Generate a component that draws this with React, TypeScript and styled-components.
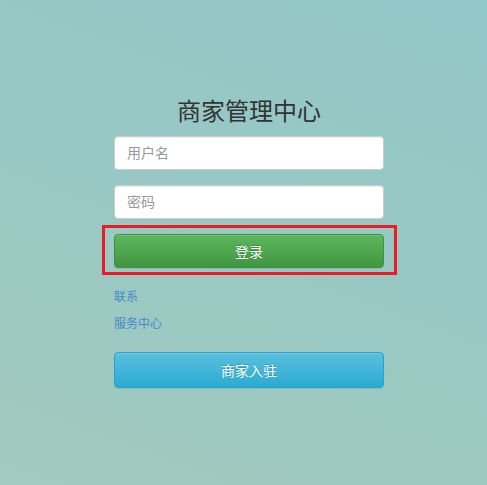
import React from "react";
import styled, { createGlobalStyle } from "styled-components";

const GlobalStyle = createGlobalStyle`
  html, body {
    margin: 0;
    padding: 0;
  }
  body {
    font-family: "Liberation Sans", "Noto Sans CJK SC", sans-serif;
  }
`;

const Page = styled.div`
  min-height: 100vh;
  box-sizing: border-box;
  display: flex;
  justify-content: center;
  padding: 99px 0 0 11px;
  background: linear-gradient(200deg, #92c7c7 0%, #98c8c4 45%, #a2cabe 100%);
`;

const Column = styled.form`
  width: 270px;
  display: flex;
  flex-direction: column;
`;

const Title = styled.h1`
  margin: 0 0 11px;
  font-size: 24px;
  line-height: 26px;
  font-weight: normal;
  text-align: center;
  color: #333;
`;

const Input = styled.input`
  box-sizing: border-box;
  height: 34px;
  width: 100%;
  margin-bottom: 15px;
  padding: 0 12px;
  border: 1px solid #ccc;
  border-radius: 4px;
  background: #fff;
  font-family: inherit;
  font-size: 14px;
  color: #555;
  box-shadow: inset 0 1px 1px rgba(0, 0, 0, 0.075);
  outline: none;
  &::placeholder {
    color: #999;
  }
`;

const Highlight = styled.div`
  position: relative;
  &::after {
    content: "";
    position: absolute;
    top: -9px;
    left: -12px;
    right: -13px;
    bottom: -7px;
    border: 3px solid #ec1c24;
    pointer-events: none;
  }
`;

const Button = styled.button<{ $tone: "success" | "info"; $tall?: boolean }>`
  box-sizing: border-box;
  width: 100%;
  height: ${(p) => (p.$tall ? "36px" : "34px")};
  border-radius: 4px;
  border: 1px solid ${(p) => (p.$tone === "success" ? "#3e8f3e" : "#28a4c9")};
  background: ${(p) =>
    p.$tone === "success"
      ? "linear-gradient(to bottom, #5cb85c 0%, #419641 100%)"
      : "linear-gradient(to bottom, #5bc0de 0%, #2aabd2 100%)"};
  box-shadow: inset 0 1px 0 rgba(255, 255, 255, 0.15), 0 1px 1px rgba(0, 0, 0, 0.075);
  color: #fff;
  font-family: inherit;
  font-size: 14px;
  text-shadow: 0 -1px 0 rgba(0, 0, 0, 0.2);
  cursor: pointer;
`;

const Links = styled.div`
  display: flex;
  flex-direction: column;
  align-items: flex-start;
  gap: 7px;
  margin: 19px 0 18px;
`;

const Link = styled.a`
  font-size: 12px;
  line-height: 20px;
  color: #428bca;
  text-decoration: none;
`;

export default function App() {
  return (
    <>
      <GlobalStyle />
      <Page>
        <Column onSubmit={(e) => e.preventDefault()}>
          <Title>商家管理中心</Title>
          <Input type="text" placeholder="用户名" />
          <Input type="password" placeholder="密码" />
          <Highlight>
            <Button type="submit" $tone="success">
              登录
            </Button>
          </Highlight>
          <Links>
            <Link href="#">联系</Link>
            <Link href="#">服务中心</Link>
          </Links>
          <Button type="button" $tone="info" $tall>
            商家入驻
          </Button>
        </Column>
      </Page>
    </>
  );
}
